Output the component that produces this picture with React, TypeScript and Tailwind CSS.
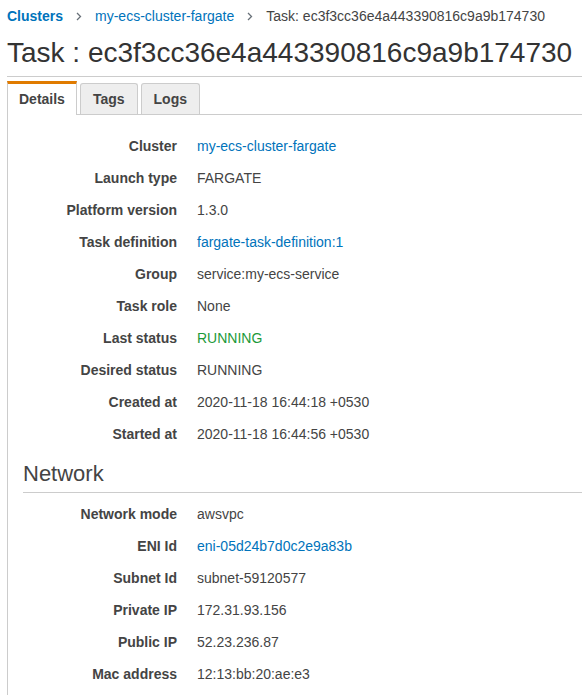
import React from "react";

type Row = { label: string; value: string; kind?: "link" | "green" };

const taskRows: Row[] = [
  { label: "Cluster", value: "my-ecs-cluster-fargate", kind: "link" },
  { label: "Launch type", value: "FARGATE" },
  { label: "Platform version", value: "1.3.0" },
  { label: "Task definition", value: "fargate-task-definition:1", kind: "link" },
  { label: "Group", value: "service:my-ecs-service" },
  { label: "Task role", value: "None" },
  { label: "Last status", value: "RUNNING", kind: "green" },
  { label: "Desired status", value: "RUNNING" },
  { label: "Created at", value: "2020-11-18 16:44:18 +0530" },
  { label: "Started at", value: "2020-11-18 16:44:56 +0530" },
];

const networkRows: Row[] = [
  { label: "Network mode", value: "awsvpc" },
  { label: "ENI Id", value: "eni-05d24b7d0c2e9a83b", kind: "link" },
  { label: "Subnet Id", value: "subnet-59120577" },
  { label: "Private IP", value: "172.31.93.156" },
  { label: "Public IP", value: "52.23.236.87" },
  { label: "Mac address", value: "12:13:bb:20:ae:e3" },
];

function Chevron() {
  return (
    <svg width="6" height="9" viewBox="0 0 6 9" className="mx-[13px] shrink-0">
      <path d="M1 1 L4.5 4.5 L1 8" fill="none" stroke="#687078" strokeWidth="1.3" />
    </svg>
  );
}

function DetailRow({ row }: { row: Row }) {
  const valueClass =
    row.kind === "link"
      ? "text-[#0073bb]"
      : row.kind === "green"
      ? "text-[#1d9a3a]"
      : "text-[#444444]";
  return (
    <div className="flex h-[32px] items-center">
      <div className="w-[169px] shrink-0 text-right font-bold text-[#444444]">{row.label}</div>
      <div className={`ml-[20px] whitespace-nowrap ${valueClass}`}>{row.value}</div>
    </div>
  );
}

export default function App() {
  return (
    <div className="w-[582px] h-[695px] overflow-hidden bg-white font-['Liberation_Sans',Arial,sans-serif] text-[14px] text-[#444444]">
      <div className="flex items-center pl-[7px] pt-[7px] h-[25px] leading-[18px] whitespace-nowrap">
        <span className="font-bold text-[#0073bb]">Clusters</span>
        <Chevron />
        <span className="text-[#0073bb]">my-ecs-cluster-fargate</span>
        <Chevron />
        <span className="text-[#444444]">Task: ec3f3cc36e4a443390816c9a9b174730</span>
      </div>
      <div className="ml-[7px] mt-[11px] border-b border-[#cccccc] pb-[6px]">
        <h1 className="text-[28px] leading-[34px] font-normal text-[#333333] whitespace-nowrap">
          Task : ec3f3cc36e4a443390816c9a9b174730
        </h1>
      </div>
      <div className="ml-[7px] mt-[4px]">
        <div className="flex items-end gap-[3px] border-b border-[#cccccc]">
          <div className="-mb-px h-[34px] border-t-[3px] border-t-[#e07b00] border-x border-x-[#cccccc] bg-white px-[11px] flex items-center font-bold text-[#444444]">
            Details
          </div>
          <div className="h-[31px] rounded-t-[3px] border border-b-0 border-[#cccccc] bg-[#eeeeee] px-[12px] flex items-center font-bold text-[#444444]">
            Tags
          </div>
          <div className="h-[31px] rounded-t-[3px] border border-b-0 border-[#cccccc] bg-[#eeeeee] px-[12px] flex items-center font-bold text-[#444444]">
            Logs
          </div>
        </div>
        <div className="border-l border-[#cccccc] pt-[15px] h-[600px]">
          {taskRows.map((r) => (
            <DetailRow key={r.label} row={r} />
          ))}
          <div className="ml-[15px] mt-[11px] border-b border-[#cccccc] pb-[5px]">
            <h2 className="text-[22px] leading-[26px] font-normal text-[#444444]">Network</h2>
          </div>
          <div className="pt-[5px]">
            {networkRows.map((r) => (
              <DetailRow key={r.label} row={r} />
            ))}
          </div>
        </div>
      </div>
    </div>
  );
}
